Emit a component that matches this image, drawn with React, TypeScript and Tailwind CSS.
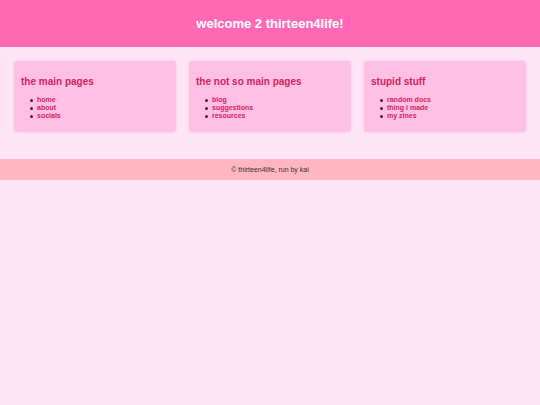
const sections = [
  {
    title: "the main pages",
    links: ["home", "about", "socials"],
  },
  {
    title: "the not so main pages",
    links: ["blog", "suggestions", "resources"],
  },
  {
    title: "stupid stuff",
    links: ["random docs", "thing i made", "my zines"],
  },
];

export default function App() {
  return (
    <div className="min-h-screen bg-[#ffe4f5] font-['Liberation_Sans',Arial,sans-serif] text-[#333333]">
      <header className="bg-[#ff69b4] py-[14px] text-center text-white">
        <h1 className="text-[13px] leading-[19px] font-bold">
          welcome 2 thirteen4life!
        </h1>
      </header>

      <main className="grid grid-cols-3 gap-[13px] px-[14px] pt-[14px] pb-[27px]">
        {sections.map((section) => (
          <section
            key={section.title}
            className="rounded-[3px] bg-[#ffc0e3] px-[7px] pt-[14px] pb-[12px] shadow-[0_0_3px_rgba(0,0,0,0.1)]"
          >
            <h2 className="text-[10px] leading-[14px] font-bold text-[#d02462]">
              {section.title}
            </h2>
            <ul className="mt-[7px] pl-[9px] text-[7px] leading-[8px]">
              {section.links.map((link) => (
                <li
                  key={link}
                  className="flex items-center gap-[4px] before:size-[3px] before:rounded-full before:bg-[#4a1838] before:content-['']"
                >
                  <a href="#" className="font-bold text-[#d02462]">
                    {link}
                  </a>
                </li>
              ))}
            </ul>
          </section>
        ))}
      </main>

      <footer className="bg-[#ffb6c1] py-[7px] text-center text-[7px] leading-[7px]">
        <p>© thirteen4life, run by kai</p>
      </footer>
    </div>
  );
}
